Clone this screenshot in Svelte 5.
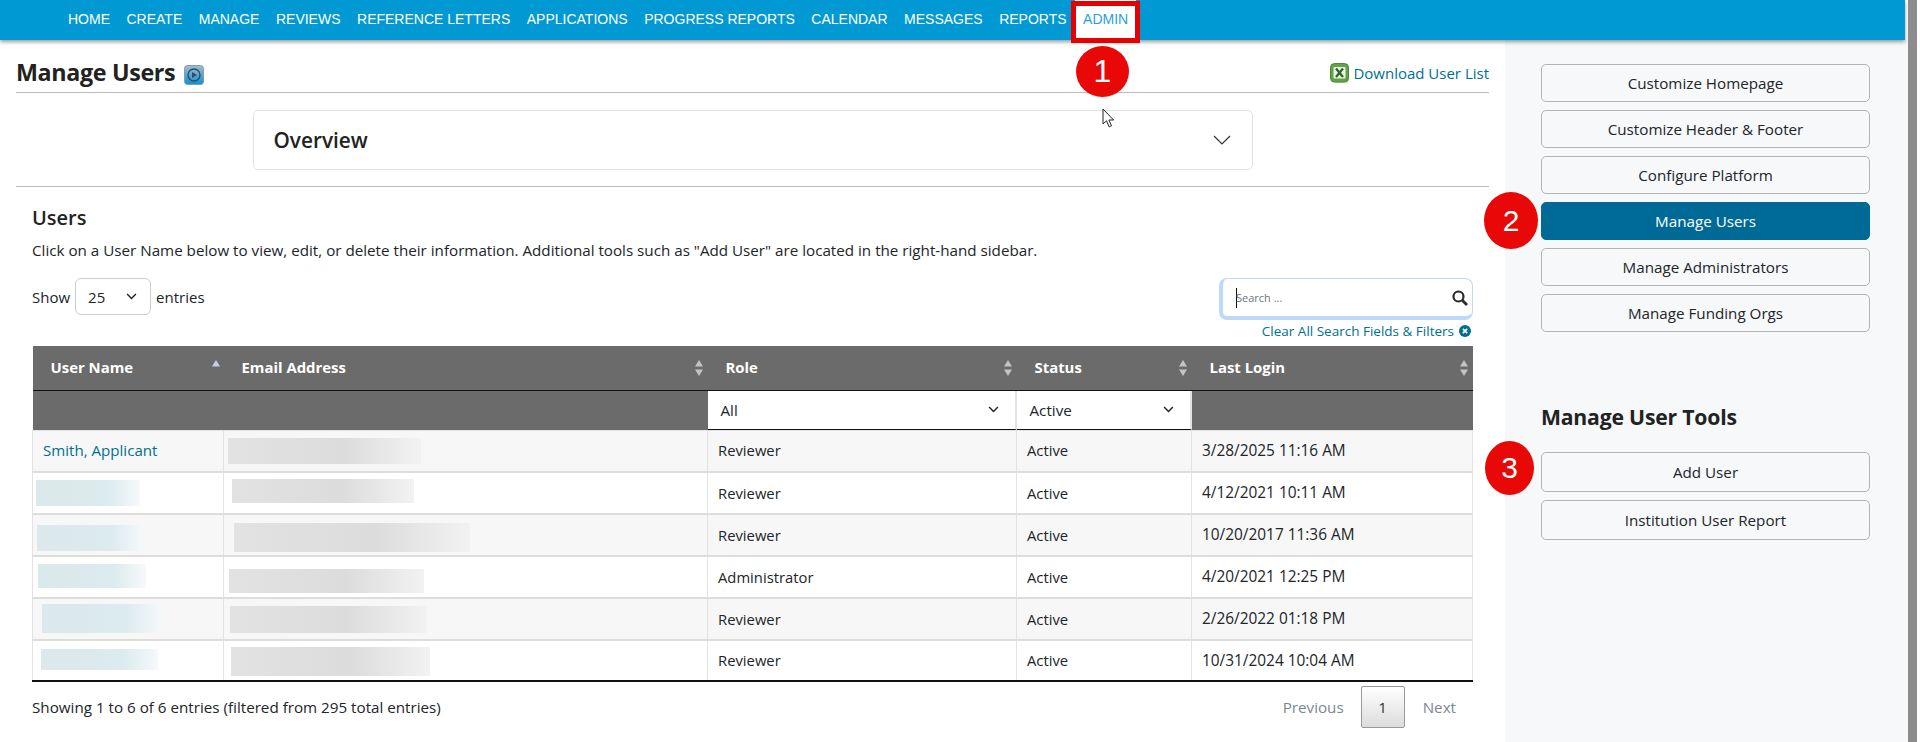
<script>
  const nav = ['HOME','CREATE','MANAGE','REVIEWS','REFERENCE LETTERS','APPLICATIONS','PROGRESS REPORTS','CALENDAR','MESSAGES','REPORTS'];
  const rows = [
    { name: 'Smith, Applicant', role: 'Reviewer', login: '3/28/2025 11:16 AM', nb: null, eb: [228,7,193,26] },
    { role: 'Reviewer', login: '4/12/2021 10:11 AM', nb: [35,7,104,26], eb: [232,6,182,24] },
    { role: 'Reviewer', login: '10/20/2017 11:36 AM', nb: [36,10,106,26], eb: [234,8,236,29] },
    { role: 'Administrator', login: '4/20/2021 12:25 PM', nb: [37,7,108,24], eb: [229,12,195,24] },
    { role: 'Reviewer', login: '2/26/2022 01:18 PM', nb: [41,5,120,29], eb: [230,7,197,27] },
    { role: 'Reviewer', login: '10/31/2024 10:04 AM', nb: [40,8,117,21], eb: [231,6,199,29] }
  ];
  const top = ['Customize Homepage','Customize Header & Footer','Configure Platform','Manage Users','Manage Administrators','Manage Funding Orgs'];
</script>

{#snippet sort()}
  <svg class="sort" width="8" height="16" viewBox="0 0 8 16"><path d="M4 0l4 6.5H0z M4 16L0 9.500h8z" fill="#c4c4c4"/></svg>
{/snippet}
{#snippet chev(w)}
  <svg width={w} height={w * 0.6} viewBox="0 0 10 6" fill="none" stroke="#222" stroke-width="1.300"><path d="M1 1l4 4 4-4"/></svg>
{/snippet}

<div class="page">
  <nav>
    {#each nav as n}<a href="#top">{n}</a>{/each}
    <a href="#top" class="active">ADMIN</a>
  </nav>
  <div class="body">
    <main>
      <header>
        <h1>Manage Users</h1>
        <svg class="help" width="20" height="20" viewBox="0 0 20 20">
          <defs><linearGradient id="hb" x1="0" y1="0" x2="0" y2="1"><stop offset="0" stop-color="#a3bccb"/><stop offset="1" stop-color="#0f8fd0"/></linearGradient></defs>
          <rect x=".5" y=".5" width="19" height="19" rx="3" fill="url(#hb)" stroke="#7d9fb3"/>
          <circle cx="10" cy="10" r="6" fill="none" stroke="#2d4e66" stroke-width="1.400"/>
          <path d="M8 7l5 3-5 3z" fill="#2d4e66"/>
        </svg>
        <a class="dl" href="#top">
          <svg width="20" height="21" viewBox="0 0 20 21">
            <rect x="1" y="2" width="18" height="18" rx="4" fill="#bbb" opacity=".6"/>
            <rect x="0.500" y="0.500" width="18" height="18.500" rx="4" fill="#62a34a" stroke="#4d8a38"/>
            <rect x="3.500" y="4" width="12" height="11.500" rx="1" fill="#eef5e6"/>
            <path d="M6 5.500l7 8.500M13 5.500l-7 8.500" stroke="#2a6a24" stroke-width="2.300"/>
          </svg>
          Download User List
        </a>
      </header>
      <div class="overview">
        <span>Overview</span>
        <svg width="18" height="10" viewBox="0 0 18 10" fill="none" stroke="#333" stroke-width="1.200"><path d="M1 1l8 8 8-8"/></svg>
      </div>
      <hr />
      <section>
        <h2>Users</h2>
        <p>Click on a User Name below to view, edit, or delete their information. Additional tools such as "Add User" are located in the right-hand sidebar.</p>
        <div class="controls">
          <div class="show">
            Show
            <div class="sel"><span>25</span>{@render chev(11)}</div>
            entries
          </div>
          <div class="searchcol">
            <div class="search">
              <i class="caret"></i><span>Search ...</span>
              <svg width="16" height="16" viewBox="0 0 16 16" fill="none" stroke="#2a2a2a" stroke-width="2.200"><circle cx="6.500" cy="6.500" r="5"/><path d="M10.500 10.500L15 15" stroke-width="2.800"/></svg>
            </div>
            <a class="clear" href="#top">Clear All Search Fields &amp; Filters
              <svg width="12" height="12" viewBox="0 0 12 12"><circle cx="6" cy="6" r="6" fill="#00708f"/><path d="M3.800 3.800l4.400 4.400M8.200 3.800L3.800 8.200" stroke="#fff" stroke-width="1.700"/></svg>
            </a>
          </div>
        </div>
        <table>
          <colgroup><col class="c1"/><col class="c2"/><col class="c3"/><col class="c4"/><col class="c5"/></colgroup>
          <thead>
            <tr class="hd">
              <th>User Name<svg class="sort" width="8" height="16" viewBox="0 0 8 16"><path d="M4 0l4 6.500H0z" fill="#c9cdf0"/></svg></th>
              <th>Email Address{@render sort()}</th>
              <th>Role{@render sort()}</th>
              <th>Status{@render sort()}</th>
              <th>Last Login{@render sort()}</th>
            </tr>
            <tr class="flt">
              <th></th><th></th>
              <th class="fs"><div><span>All</span>{@render chev(11)}</div></th>
              <th class="fs"><div><span>Active</span>{@render chev(11)}</div></th>
              <th></th>
            </tr>
          </thead>
          <tbody>
            {#each rows as r}
              <tr>
                <td class="n">
                  {#if r.name}<a href="#top">{r.name}</a>{:else}<i class="blur bn" style="left:{r.nb[0]-32}px;top:{r.nb[1]}px;width:{r.nb[2]}px;height:{r.nb[3]}px"></i>{/if}
                </td>
                <td class="n"><i class="blur be" style="left:{r.eb[0]-224}px;top:{r.eb[1]}px;width:{r.eb[2]}px;height:{r.eb[3]}px"></i></td>
                <td>{r.role}</td>
                <td>Active</td>
                <td class="d">{r.login}</td>
              </tr>
            {/each}
          </tbody>
        </table>
        <div class="foot">
          <span>Showing 1 to 6 of 6 entries (filtered from 295 total entries)</span>
          <div class="pager"><span>Previous</span><b>1</b><span>Next</span></div>
        </div>
      </section>
    </main>
    <aside>
      <div class="btns">
        {#each top as t}<button class:on={t === 'Manage Users'}>{t}</button>{/each}
      </div>
      <h3>Manage User Tools</h3>
      <div class="btns tall">
        <button>Add User</button>
        <button>Institution User Report</button>
      </div>
    </aside>
    <div class="gutter"></div>
  </div>

  <div class="redbox"></div>
  <div class="badge b1">1</div>
  <div class="badge b2">2</div>
  <div class="badge b3">3</div>
  <svg class="cursor" width="13" height="20" viewBox="0 0 13 20"><path d="M1 1v15l3.500-3.200 2.600 6 2.400-1-2.600-5.800h4.700z" fill="#fff" stroke="#222" stroke-width="1"/></svg>
  <div class="scroll"></div>
</div>

<style>
  :global(body) { margin: 0; background: #fff; }
  .page { position: relative; width: 1920px; height: 742px; overflow: hidden; font-family: "Open Sans", "Noto Sans", sans-serif; font-size: 15px; color: #212529; }
  nav { height: 40px; width: 1905px; background: #0099d3; box-shadow: 0 2px 4px rgba(0,0,0,.4); display: flex; align-items: stretch; padding-left: 68px; box-sizing: border-box; gap: 16.500px; position: relative; z-index: 2; font-family: "Liberation Sans", sans-serif; font-size: 14px; }
  nav a { color: #fff; text-decoration: none; line-height: 38px; white-space: nowrap; }
  nav a.active { background: #fff; color: #2a9fe0; padding: 0 8px; margin-left: -8px; }
  .body { display: flex; height: 702px; }
  main { width: 1505px; padding: 0 16px; box-sizing: border-box; flex: none; }
  header { display: flex; align-items: center; height: 53px; padding-top: 12px; box-sizing: border-box; border-bottom: 1px solid #bbb; }
  h1 { font-size: 23.300px; font-weight: 700; margin: 0 9px 0 0; color: #222; letter-spacing: -.35px; }
  .help { margin-top: 5px; }
  .dl { margin-left: auto; display: flex; align-items: center; gap: 3px; color: #00708f; text-decoration: none; font-size: 15px; margin-top: 2px; }
  .overview { width: 1000px; height: 60px; margin: 17px auto 0; border: 1px solid #e2e2e2; border-radius: 5px; box-sizing: border-box; display: flex; align-items: center; justify-content: space-between; padding: 0 21px 0 20px; font-size: 20.800px; font-weight: 600; color: #222; }
  hr { border: 0; border-top: 1px solid #bbb; margin: 16px 0 0; }
  section { padding: 0 0 0 16px; width: 1441px; }
  h2 { font-size: 20px; font-weight: 600; margin: 17px 0 0; line-height: 28px; color: #222; }
  p { margin: 8px 0 0; font-size: 15.200px; line-height: 20px; white-space: nowrap; }
  .controls { display: flex; justify-content: space-between; margin-top: 18px; height: 68px; }
  .show { display: flex; align-items: center; gap: 5px; height: 37px; }
  .sel { width: 76px; height: 37px; box-sizing: border-box; border: 1px solid #ccc; border-radius: 6px; display: flex; align-items: center; justify-content: space-between; padding: 0 13px 0 12px; }
  .searchcol { width: 254px; }
  .search { height: 42px; box-sizing: border-box; border: 4px solid #bcd9fb; border-top-width: 1px; border-right-width: 1px; border-radius: 8px; border-top-color: #c9d6e4; border-right-color: #c9d6e4; display: flex; align-items: center; padding: 0 4px 0 13px; position: relative; }
  .search span { font-size: 11px; color: #6c757d; flex: 1; margin-left: -1px; }
  .caret { width: 1px; height: 20px; background: #111; }
  .clear { display: flex; justify-content: flex-end; align-items: center; gap: 5px; color: #00708f; font-size: 13.500px; text-decoration: none; margin-top: 2px; padding-right: 2px; white-space: nowrap; }
  table { width: 1440px; border-collapse: collapse; table-layout: fixed; font-size: 14.800px; }
  .c1 { width: 191px; } .c2 { width: 484px; } .c3 { width: 309px; } .c4 { width: 175px; } .c5 { width: 281px; }
  .hd th { height: 44px; box-sizing: border-box; background: #6b6b6b; color: #fff; font-weight: 700; text-align: left; padding: 0 0 2px 18px; position: relative; border-bottom: 1px solid #111; font-size: 14.900px; }
  .sort { position: absolute; right: 5px; top: 14px; }
  .hd th:first-child .sort { right: 4px; top: 14px; }
  .flt th { height: 39px; box-sizing: border-box; background: #6b6b6b; padding: 0; }
  .fs div { height: 39px; background: #fff; box-sizing: border-box; border-bottom: 1px solid #111; border-right: 2px solid #dfe2e6; display: flex; align-items: center; justify-content: space-between; padding: 0 16px 0 13px; font-weight: 400; color: #212529; font-size: 15.200px; }
  tbody td { height: 42px; box-sizing: border-box; border: 1px solid #e3e3e3; border-bottom: 2px solid #ddd; padding: 0 10px 1px; position: relative; }
  tbody tr:nth-child(odd) td { background: #f7f7f7; }
  tbody tr:last-child td { height: 41px; border-bottom: 2px solid #111; }
  td.n a { color: #00708f; text-decoration: none; font-size: 15.100px; }
  td.d { font-size: 15.400px; }
  .blur { position: absolute; display: block; }
  .bn { background: linear-gradient(90deg, #dbe8ec, #dcebef 70%, #f5f9fa); }
  .be { background: linear-gradient(90deg, #e2e2e2, #dcdcdc 60%, #f2f2f2); }
  .foot { display: flex; justify-content: space-between; align-items: center; margin-top: 4px; height: 42px; font-size: 15.200px; }
  .pager { display: flex; align-items: center; color: #7b8794; padding-right: 17px; }
  .pager b { width: 44px; height: 42px; box-sizing: border-box; margin: 0 18px 0 17px; border: 1px solid #999; border-radius: 2px; background: linear-gradient(#fff, #dcdcdc); display: flex; align-items: center; justify-content: center; font-weight: 400; color: #333; }
  aside { width: 403px; flex: none; background: #f7f8fa; padding: 24px 38px 0 36px; box-sizing: border-box; }
  .btns { display: flex; flex-direction: column; gap: 8px; }
  .btns.tall button { height: 40px; }
  button { height: 38px; font: inherit; font-size: 15.200px; color: #212529; background: #f7f8fa; border: 1px solid #b3b3b3; border-radius: 5px; padding: 0; }
  button.on { background: #006a96; border-color: #006a96; color: #fff; }
  h3 { font-size: 21.200px; font-weight: 700; margin: 71px 0 21px; line-height: 28px; color: #222; letter-spacing: -.2px; }
  .gutter { flex: 1; }
  .scroll { position: absolute; left: 1908px; top: 0; width: 9px; height: 742px; background: #8c8c8c; z-index: 3; }
  .redbox { position: absolute; left: 1071px; top: 1px; width: 69px; height: 42px; box-sizing: border-box; border: 5px solid #e60000; z-index: 3; }
  .badge { position: absolute; border-radius: 50%; background: #e90808; color: #fff; font-family: "Liberation Sans", sans-serif; text-align: center; z-index: 3; }
  .b1 { left: 1076px; top: 46px; width: 53px; height: 51px; font-size: 32px; line-height: 51px; }
  .b2 { left: 1484px; top: 192px; width: 54px; height: 57px; font-size: 30px; line-height: 57px; }
  .b3 { left: 1485px; top: 441px; width: 49px; height: 54px; font-size: 30px; line-height: 54px; }
  .cursor { position: absolute; left: 1102px; top: 108px; z-index: 3; }
</style>
